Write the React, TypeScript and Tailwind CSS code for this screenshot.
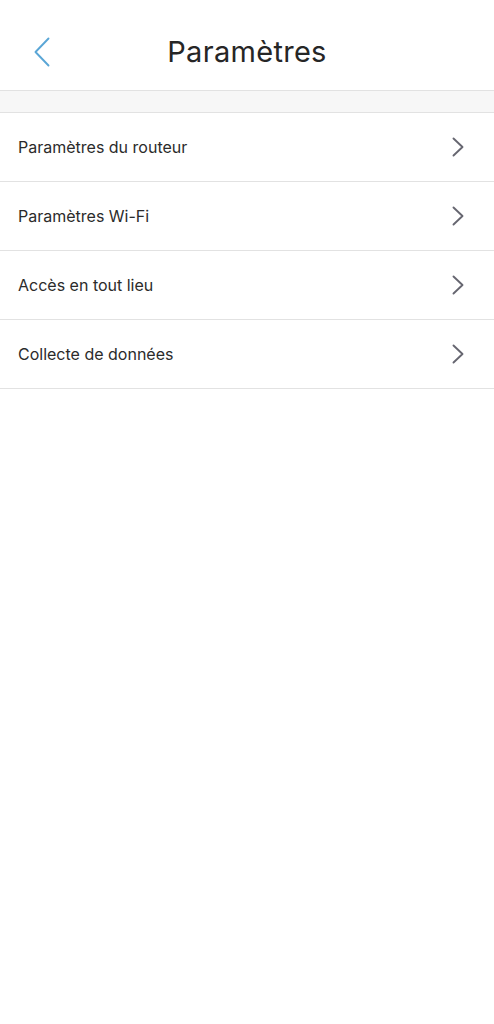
const items = [
  'Paramètres du routeur',
  'Paramètres Wi-Fi',
  'Accès en tout lieu',
  'Collecte de données',
]

export default function App() {
  return (
    <div className="min-h-screen w-full bg-white font-['Inter',sans-serif] text-[#262626]">
      {/* Header */}
      <header className="relative flex h-[91px] items-center justify-center border-b border-[#e2e2e2]">
        <button className="absolute left-[33px] top-[37px]" aria-label="Retour">
          <svg width="18" height="30" viewBox="0 0 18 30" fill="none">
            <path d="M15.5 1.5 L2.5 15 L15.5 28.5" stroke="#5aa6d6" strokeWidth="1.9" strokeLinecap="round" strokeLinejoin="round" />
          </svg>
        </button>
        <h1 className="pt-[14px] text-[29px] font-normal tracking-[0.3px]">Paramètres</h1>
      </header>

      {/* Spacer band */}
      <div className="h-[22px] border-b border-[#e2e2e2] bg-[#f7f7f7]" />

      {/* Menu list */}
      <ul>
        {items.map((label) => (
          <li
            key={label}
            className="flex h-[69px] items-center justify-between border-b border-[#e2e2e2] pl-[18px] pr-[30px]"
          >
            <span className="text-[16px] text-[#2b2b2b]">{label}</span>
            <svg width="12" height="20" viewBox="0 0 12 20" fill="none">
              <path d="M1.5 1.5 L10.5 10 L1.5 18.5" stroke="#666670" strokeWidth="1.9" strokeLinecap="round" strokeLinejoin="round" />
            </svg>
          </li>
        ))}
      </ul>
    </div>
  )
}
